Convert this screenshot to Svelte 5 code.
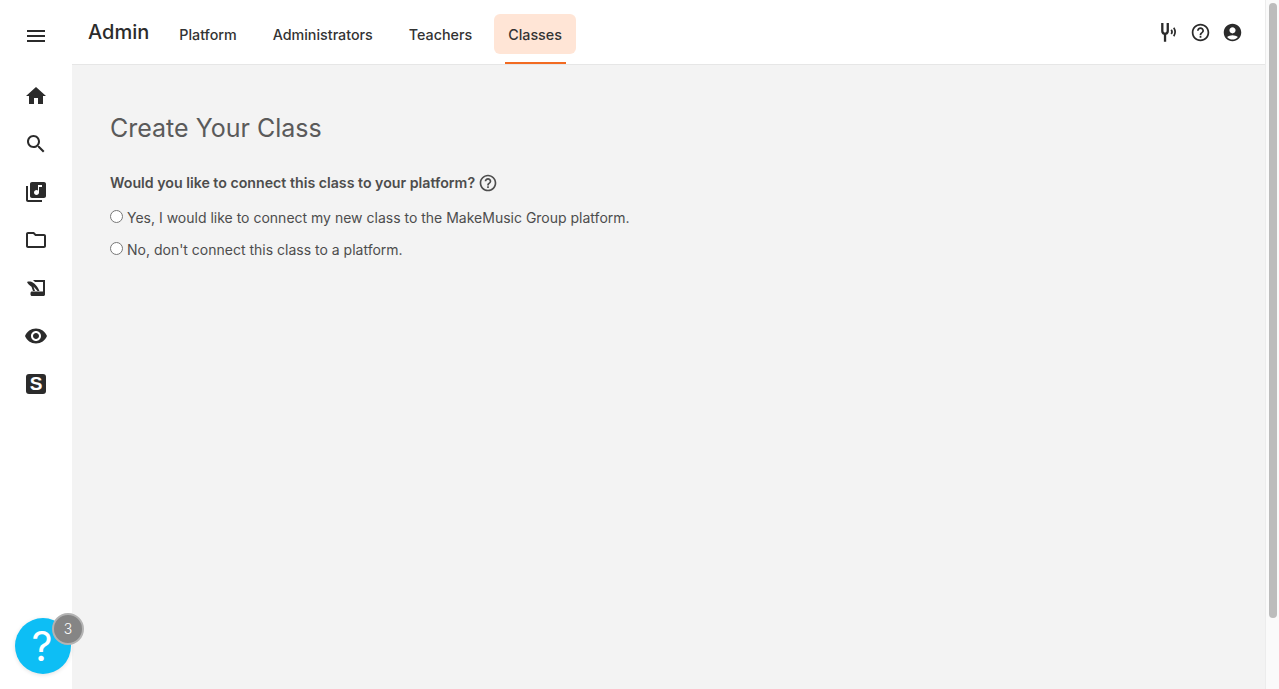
<script>
  const tabs = ['Platform', 'Administrators', 'Teachers', 'Classes'];
  const activeTab = 'Classes';
  const help = 'M11 18h2v-2h-2v2zm1-16C6.48 2 2 6.48 2 12s4.48 10 10 10 10-4.48 10-10S17.52 2 12 2zm0 18c-4.41 0-8-3.59-8-8s3.59-8 8-8 8 3.59 8 8-3.59 8-8 8zm0-14c-2.21 0-4 1.79-4 4h2c0-1.1.9-2 2-2s2 .9 2 2c0 2-3 1.75-3 5h2c0-2.25 3-2.5 3-5 0-2.21-1.79-4-4-4z';
  const nav = [
    'M10 20v-6h4v6h5v-8h3L12 3 2 12h3v8z',
    'M15.5 14h-.79l-.28-.27C15.41 12.59 16 11.11 16 9.5 16 5.91 13.09 3 9.5 3S3 5.91 3 9.5 5.91 16 9.5 16c1.61 0 3.09-.59 4.23-1.57l.27.28v.79l5 4.99L20.49 19l-4.99-5zm-6 0C7.01 14 5 11.99 5 9.5S7.01 5 9.5 5 14 7.01 14 9.5 11.99 14 9.5 14z',
    'M20 2H8c-1.1 0-2 .9-2 2v12c0 1.1.9 2 2 2h12c1.1 0 2-.9 2-2V4c0-1.1-.9-2-2-2zm-2 5h-3v5.5c0 1.38-1.12 2.5-2.5 2.5S10 13.88 10 12.5s1.12-2.5 2.5-2.5c.57 0 1.08.19 1.5.51V5h4v2zM4 6H2v14c0 1.1.9 2 2 2h14v-2H4V6z',
    'M9.17 6l2 2H20v10H4V6h5.17M10 4H4c-1.1 0-1.99.9-1.99 2L2 18c0 1.1.9 2 2 2h16c1.1 0 2-.9 2-2V8c0-1.1-.9-2-2-2h-8l-2-2z',
    'M9 4h12v14.500c0 .8-.7 1.500-1.500 1.500H8c-.8 0-1.500-.7-1.500-1.500V17c0-.8.7-1.500 1.500-1.500h11V6h-8zM3 6c3-1.200 7-.2 11 6l1.500 3h-2L9.500 10.500 11 15H9L7.500 10.800C5.800 9.500 4 8 3 6z',
    'M12 4.5C7 4.5 2.73 7.61 1 12c1.73 4.39 6 7.5 11 7.5s9.27-3.11 11-7.5c-1.73-4.39-6-7.5-11-7.5zM12 17c-2.76 0-5-2.24-5-5s2.24-5 5-5 5 2.24 5 5-2.24 5-5 5zm0-8c-1.66 0-3 1.34-3 3s1.34 3 3 3 3-1.34 3-3-1.34-3-3-3z'
  ];
  const options = [
    "Yes, I would like to connect my new class to the MakeMusic Group platform.",
    "No, don't connect this class to a platform."
  ];
</script>

<div class="shell">
  <aside class="side">
    <button class="nav-btn menu" aria-label="Menu">
      <svg viewBox="0 0 24 24"><path d="M3 18h18v-2H3v2zm0-5h18v-2H3v2zm0-7v2h18V6H3z" /></svg>
    </button>
    {#each nav as d}
      <button class="nav-btn" aria-label="Navigation item">
        <svg viewBox="0 0 24 24"><path d={d} fill-rule="evenodd" /></svg>
      </button>
    {/each}
    <button class="nav-btn" aria-label="Smart"><span class="s-box">S</span></button>

    <div class="help-fab">
      <span class="q">?</span>
      <span class="badge">3</span>
    </div>
  </aside>

  <div class="main">
    <header class="top">
      <h1>Admin</h1>
      <nav class="tabs">
        {#each tabs as t}
          <a class="tab" class:active={t === activeTab} href="#top">{t}</a>
        {/each}
      </nav>
      <div class="actions">
        <svg viewBox="-1 0 20 20" class="ic"><path d="M2 1H4.200V8.300C4.200 9.300 4.800 10 5.700 10C6.600 10 7.200 9.300 7.200 8.300V1H9.400V8.500C9.400 10.400 8.300 11.800 6.800 12.200V18.700H4.600V12.200C3.100 11.800 2 10.400 2 8.500Z" /><path d="M11.600 7.300c.9 1.200.9 3 0 4.200M14 5.500c1.500 2.300 1.500 5.700 0 8" fill="none" stroke="currentColor" stroke-width="1.600" /></svg>
        <svg viewBox="0 0 24 24" class="ic"><path d={help} /></svg>
        <svg viewBox="0 0 24 24" class="ic"><path d="M12 2C6.480 2 2 6.480 2 12s4.480 10 10 10 10-4.480 10-10S17.520 2 12 2zm0 4c1.930 0 3.500 1.570 3.500 3.500S13.930 13 12 13s-3.500-1.570-3.500-3.500S10.070 6 12 6zm0 14c-2.030 0-4.430-.82-6.140-2.880C7.550 15.800 9.680 15 12 15s4.450.8 6.140 2.120C16.430 19.180 14.030 20 12 20z" /></svg>
      </div>
    </header>

    <main class="content">
      <h2>Create Your Class</h2>
      <div class="question">
        <span>Would you like to connect this class to your platform?</span>
        <svg viewBox="0 0 24 24" class="qhelp"><path d={help} /></svg>
      </div>
      {#each options as o}
        <label class="opt"><input type="radio" name="connect" /><span>{o}</span></label>
      {/each}
    </main>
  </div>

  <div class="scrollbar"><div class="thumb"></div></div>
</div>

<style>
  :global(body) {
    margin: 0;
    overflow: hidden;
    font-family: Inter, "Liberation Sans", sans-serif;
  }
  .shell {
    display: flex;
    height: 689px;
    background: #f3f3f3;
    color: #333;
  }
  .side {
    position: relative;
    width: 72px;
    flex: none;
    background: #fff;
    display: flex;
    flex-direction: column;
    align-items: center;
    padding-top: 12px;
    box-sizing: border-box;
  }
  .nav-btn {
    width: 48px;
    height: 48px;
    flex: none;
    padding: 0;
    border: 0;
    background: none;
    display: flex;
    align-items: center;
    justify-content: center;
    color: #2b2b2b;
  }
  .nav-btn.menu {
    margin-bottom: 12px;
  }
  .nav-btn svg {
    width: 24px;
    height: 24px;
    fill: currentColor;
  }
  .s-box {
    width: 20px;
    height: 20px;
    border-radius: 3px;
    background: #2b2b2b;
    color: #fff;
    font-size: 19px;
    font-weight: 700;
    line-height: 20px;
    text-align: center;
  }
  .help-fab {
    position: absolute;
    left: 15px;
    top: 618px;
    width: 56px;
    height: 56px;
    border-radius: 50%;
    background: #0dbef5;
    display: flex;
    align-items: center;
    justify-content: center;
    box-shadow: 0 1px 4px rgba(0, 0, 0, 0.12);
  }
  .q {
    color: #fff;
    font-size: 41px;
    font-weight: 400;
    line-height: 1;
    margin-right: 2px;
  }
  .badge {
    position: absolute;
    left: 37px;
    top: -5px;
    width: 28px;
    height: 28px;
    border-radius: 50%;
    background: #858585;
    border: 2.5px solid #b3b3b3;
    box-sizing: content-box;
    color: #fff;
    font-size: 14px;
    font-weight: 300;
    line-height: 28px;
    text-align: center;
  }
  .main {
    flex: 1;
    min-width: 0;
    display: flex;
    flex-direction: column;
  }
  .top {
    height: 65px;
    box-sizing: border-box;
    flex: none;
    background: #fff;
    border-bottom: 1px solid #e6e6e6;
    display: flex;
    align-items: flex-start;
    padding-left: 16px;
    padding-right: 22px;
  }
  h1 {
    margin: 17px 0 0;
    font-size: 20px;
    line-height: 30px;
    font-weight: 500;
    color: #2b2b2b;
  }
  .tabs {
    display: flex;
    gap: 8px;
    margin-left: 16px;
    margin-top: 14px;
  }
  .tab {
    position: relative;
    height: 40px;
    padding: 0 14px;
    border-radius: 6px;
    display: flex;
    align-items: center;
    font-size: 14.3px;
    font-weight: 500;
    color: #333;
    text-decoration: none;
  }
  .tab.active {
    background: #ffe5d6;
  }
  .tab.active::after {
    content: '';
    position: absolute;
    left: 11px;
    right: 10px;
    bottom: -10px;
    height: 2px;
    background: #f26a21;
  }
  .actions {
    margin-left: auto;
    margin-top: 22px;
    display: flex;
    gap: 11px;
  }
  .ic {
    width: 21px;
    height: 21px;
    fill: currentColor;
    color: #2b2b2b;
  }
  .content {
    flex: 1;
    padding: 46px 38px;
    color: #4d4d4d;
  }
  h2 {
    margin: 0 0 25px;
    font-size: 25px;
    line-height: 34px;
    font-weight: 400;
    color: #5a5a5a;
  }
  .question {
    display: flex;
    align-items: center;
    gap: 3px;
    height: 24px;
    font-size: 14.2px;
    font-weight: 600;
    margin-bottom: 7px;
  }
  .qhelp {
    width: 20px;
    height: 20px;
    fill: #4d4d4d;
    margin-top: 1px;
  }
  .opt {
    display: flex;
    align-items: center;
    height: 32px;
    font-size: 14px;
  }
  .opt input {
    width: 13px;
    height: 13px;
    margin: 0 4px 2px 0;
  }
  .scrollbar {
    flex: none;
    width: 14px;
    background: #fafafa;
    border-left: 1px solid #ececec;
    box-sizing: border-box;
    padding: 3px 2px 0 3px;
  }
  .thumb {
    height: 615px;
    border-radius: 5px;
    background: #bcbcbc;
  }
</style>
